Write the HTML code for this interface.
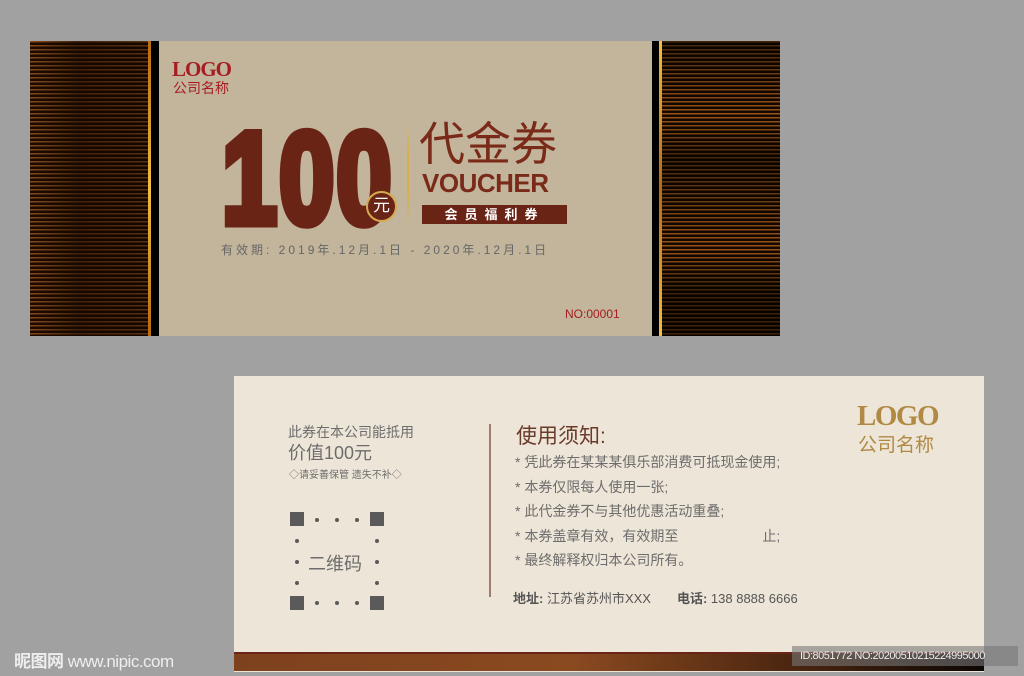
<!DOCTYPE html>
<html><head><meta charset="utf-8"><style>
*{margin:0;padding:0;box-sizing:border-box}
body{width:1024px;height:676px;background:#a1a1a1;position:relative;overflow:hidden;font-family:"Liberation Sans","Noto Sans CJK SC",sans-serif}
.a{position:absolute}
.stripesL{background:linear-gradient(90deg,rgba(60,25,5,0) 0%,rgba(20,8,0,.6) 40%,rgba(0,0,0,.35) 100%),repeating-linear-gradient(180deg,#8a4a18 0 1.5px,#1a0a02 1.5px 4px)}
.stripesR{background:linear-gradient(180deg,rgba(0,0,0,.55) 0%,rgba(0,0,0,0) 25%,rgba(0,0,0,.55) 40%,rgba(0,0,0,0) 70%,rgba(0,0,0,.6) 85%),repeating-linear-gradient(180deg,#9a5418 0 1.5px,#140800 1.5px 4px)}
.cn{font-family:"Liberation Sans","Noto Sans CJK SC",sans-serif}
</style></head><body>
<div class="a stripesL" style="left:30px;top:41px;width:119px;height:295px"></div>
<div class="a" style="left:148px;top:41px;width:3px;height:295px;background:linear-gradient(#b86a10,#f0c040 50%,#b86a10)"></div>
<div class="a" style="left:151px;top:41px;width:8px;height:295px;background:#000"></div>
<div class="a" style="left:159px;top:41px;width:493px;height:295px;background:#c2b59b"></div>
<div class="a" style="left:652px;top:41px;width:8px;height:295px;background:#000"></div>
<div class="a" style="left:659px;top:41px;width:3px;height:295px;background:linear-gradient(#f0c040,#b86a10 50%,#f0c040)"></div>
<div class="a stripesR" style="left:662px;top:41px;width:118px;height:295px"></div>

<div class="a" style="left:172px;top:57px;font-family:'Liberation Serif',serif;font-weight:bold;font-size:21px;color:#a51d22;letter-spacing:-1px">LOGO</div>
<div class="a cn" style="left:173px;top:78px;font-size:14px;color:#a51d22">公司名称</div>
<div class="a" style="left:222px;top:113px;font-weight:bold;font-size:130px;line-height:130px;color:#6a2416;-webkit-text-stroke:9px #6a2416;letter-spacing:3px;transform:scaleX(.76);transform-origin:left;white-space:nowrap">100</div>
<div class="a cn" style="left:366px;top:191px;width:31px;height:31px;border-radius:50%;background:#6a2416;border:2px solid #d4aa50;color:#fff;font-size:17px;text-align:center;line-height:26px">元</div>
<div class="a" style="left:407px;top:122px;width:2px;height:102px;background:linear-gradient(#c2b59b,#d6b04a 30%,#d6b04a 70%,#c2b59b)"></div>
<div class="a cn" style="left:419px;top:116px;font-size:46px;color:#7a2a18;line-height:56px">代金券</div>
<div class="a" style="left:422px;top:168px;font-weight:bold;font-size:26px;color:#7a2a18;letter-spacing:-.5px">VOUCHER</div>
<div class="a cn" style="left:422px;top:205px;width:145px;height:19px;background:#6a2416;color:#fff;font-size:13px;font-weight:bold;text-align:center;line-height:19px;letter-spacing:7px">会员福利券</div>
<div class="a cn" style="left:221px;top:241px;font-size:12px;color:#666;letter-spacing:3px;white-space:nowrap">有效期: 2019年.12月.1日 - 2020年.12月.1日</div>
<div class="a" style="left:565px;top:307px;font-size:12px;color:#a51d22">NO:00001</div>

<div class="a" style="left:234px;top:376px;width:750px;height:296px;background:#ede5d7"></div>
<div class="a" style="left:234px;top:652px;width:750px;height:19px;background:linear-gradient(90deg,#7d411d 0%,#8a4a20 45%,#4a2510 75%,#0c0604 100%);border-top:2px solid #6a2518"></div>
<div class="a cn" style="left:288px;top:422px;font-size:14px;color:#6d6d6d">此券在本公司能抵用</div>
<div class="a cn" style="left:288px;top:439px;font-size:18px;color:#6d6d6d">价值100元</div>
<div class="a cn" style="left:289px;top:466px;font-size:10px;color:#6d6d6d">◇请妥善保管 遗失不补◇</div>
<svg class="a" style="left:288px;top:510px" width="100" height="102">
<g fill="#5a5a5a"><rect x="2" y="2" width="14" height="14"/><rect x="82" y="2" width="14" height="14"/><rect x="2" y="86" width="14" height="14"/><rect x="82" y="86" width="14" height="14"/>
<circle cx="29" cy="10" r="2"/><circle cx="49" cy="10" r="2"/><circle cx="69" cy="10" r="2"/>
<circle cx="29" cy="93" r="2"/><circle cx="49" cy="93" r="2"/><circle cx="69" cy="93" r="2"/>
<circle cx="9" cy="31" r="2"/><circle cx="9" cy="52" r="2"/><circle cx="9" cy="73" r="2"/>
<circle cx="89" cy="31" r="2"/><circle cx="89" cy="52" r="2"/><circle cx="89" cy="73" r="2"/></g></svg>
<div class="a cn" style="left:308px;top:550px;font-size:18px;color:#6d6d6d">二维码</div>
<div class="a" style="left:489px;top:424px;width:2px;height:173px;background:#9a7d6e"></div>
<div class="a cn" style="left:516px;top:420px;font-size:21px;color:#6a3a2a">使用须知:</div>
<div class="a cn" style="left:515px;top:450px;font-size:14px;color:#6d6d6d;line-height:24.5px">
<div>* 凭此券在某某某俱乐部消费可抵现金使用;</div>
<div>* 本券仅限每人使用一张;</div>
<div>* 此代金券不与其他优惠活动重叠;</div>
<div>* 本券盖章有效，有效期至　　　　　　止;</div>
<div>* 最终解释权归本公司所有。</div></div>
<div class="a cn" style="left:513px;top:588px;font-size:13px;color:#555"><b>地址:</b> 江苏省苏州市XXX　　<b>电话:</b> 138 8888 6666</div>
<div class="a" style="left:857px;top:400px;font-family:'Liberation Serif',serif;font-weight:bold;font-size:29px;color:#b08a45;letter-spacing:-1.5px">LOGO</div>
<div class="a cn" style="left:858px;top:430px;font-size:19px;color:#b08a45">公司名称</div>

<div class="a cn" style="left:14px;top:647px;font-size:17px;font-weight:bold;color:#eee;letter-spacing:-.5px">昵图网 <span style="font-weight:normal">www.nipic.com</span></div>
<div class="a" style="left:792px;top:646px;width:226px;height:20px;background:rgba(120,120,120,.6);color:#eee;font-size:11px;line-height:20px;padding-left:8px;letter-spacing:-.5px">ID:8051772 NO:20200510215224995000</div>
</body></html>
